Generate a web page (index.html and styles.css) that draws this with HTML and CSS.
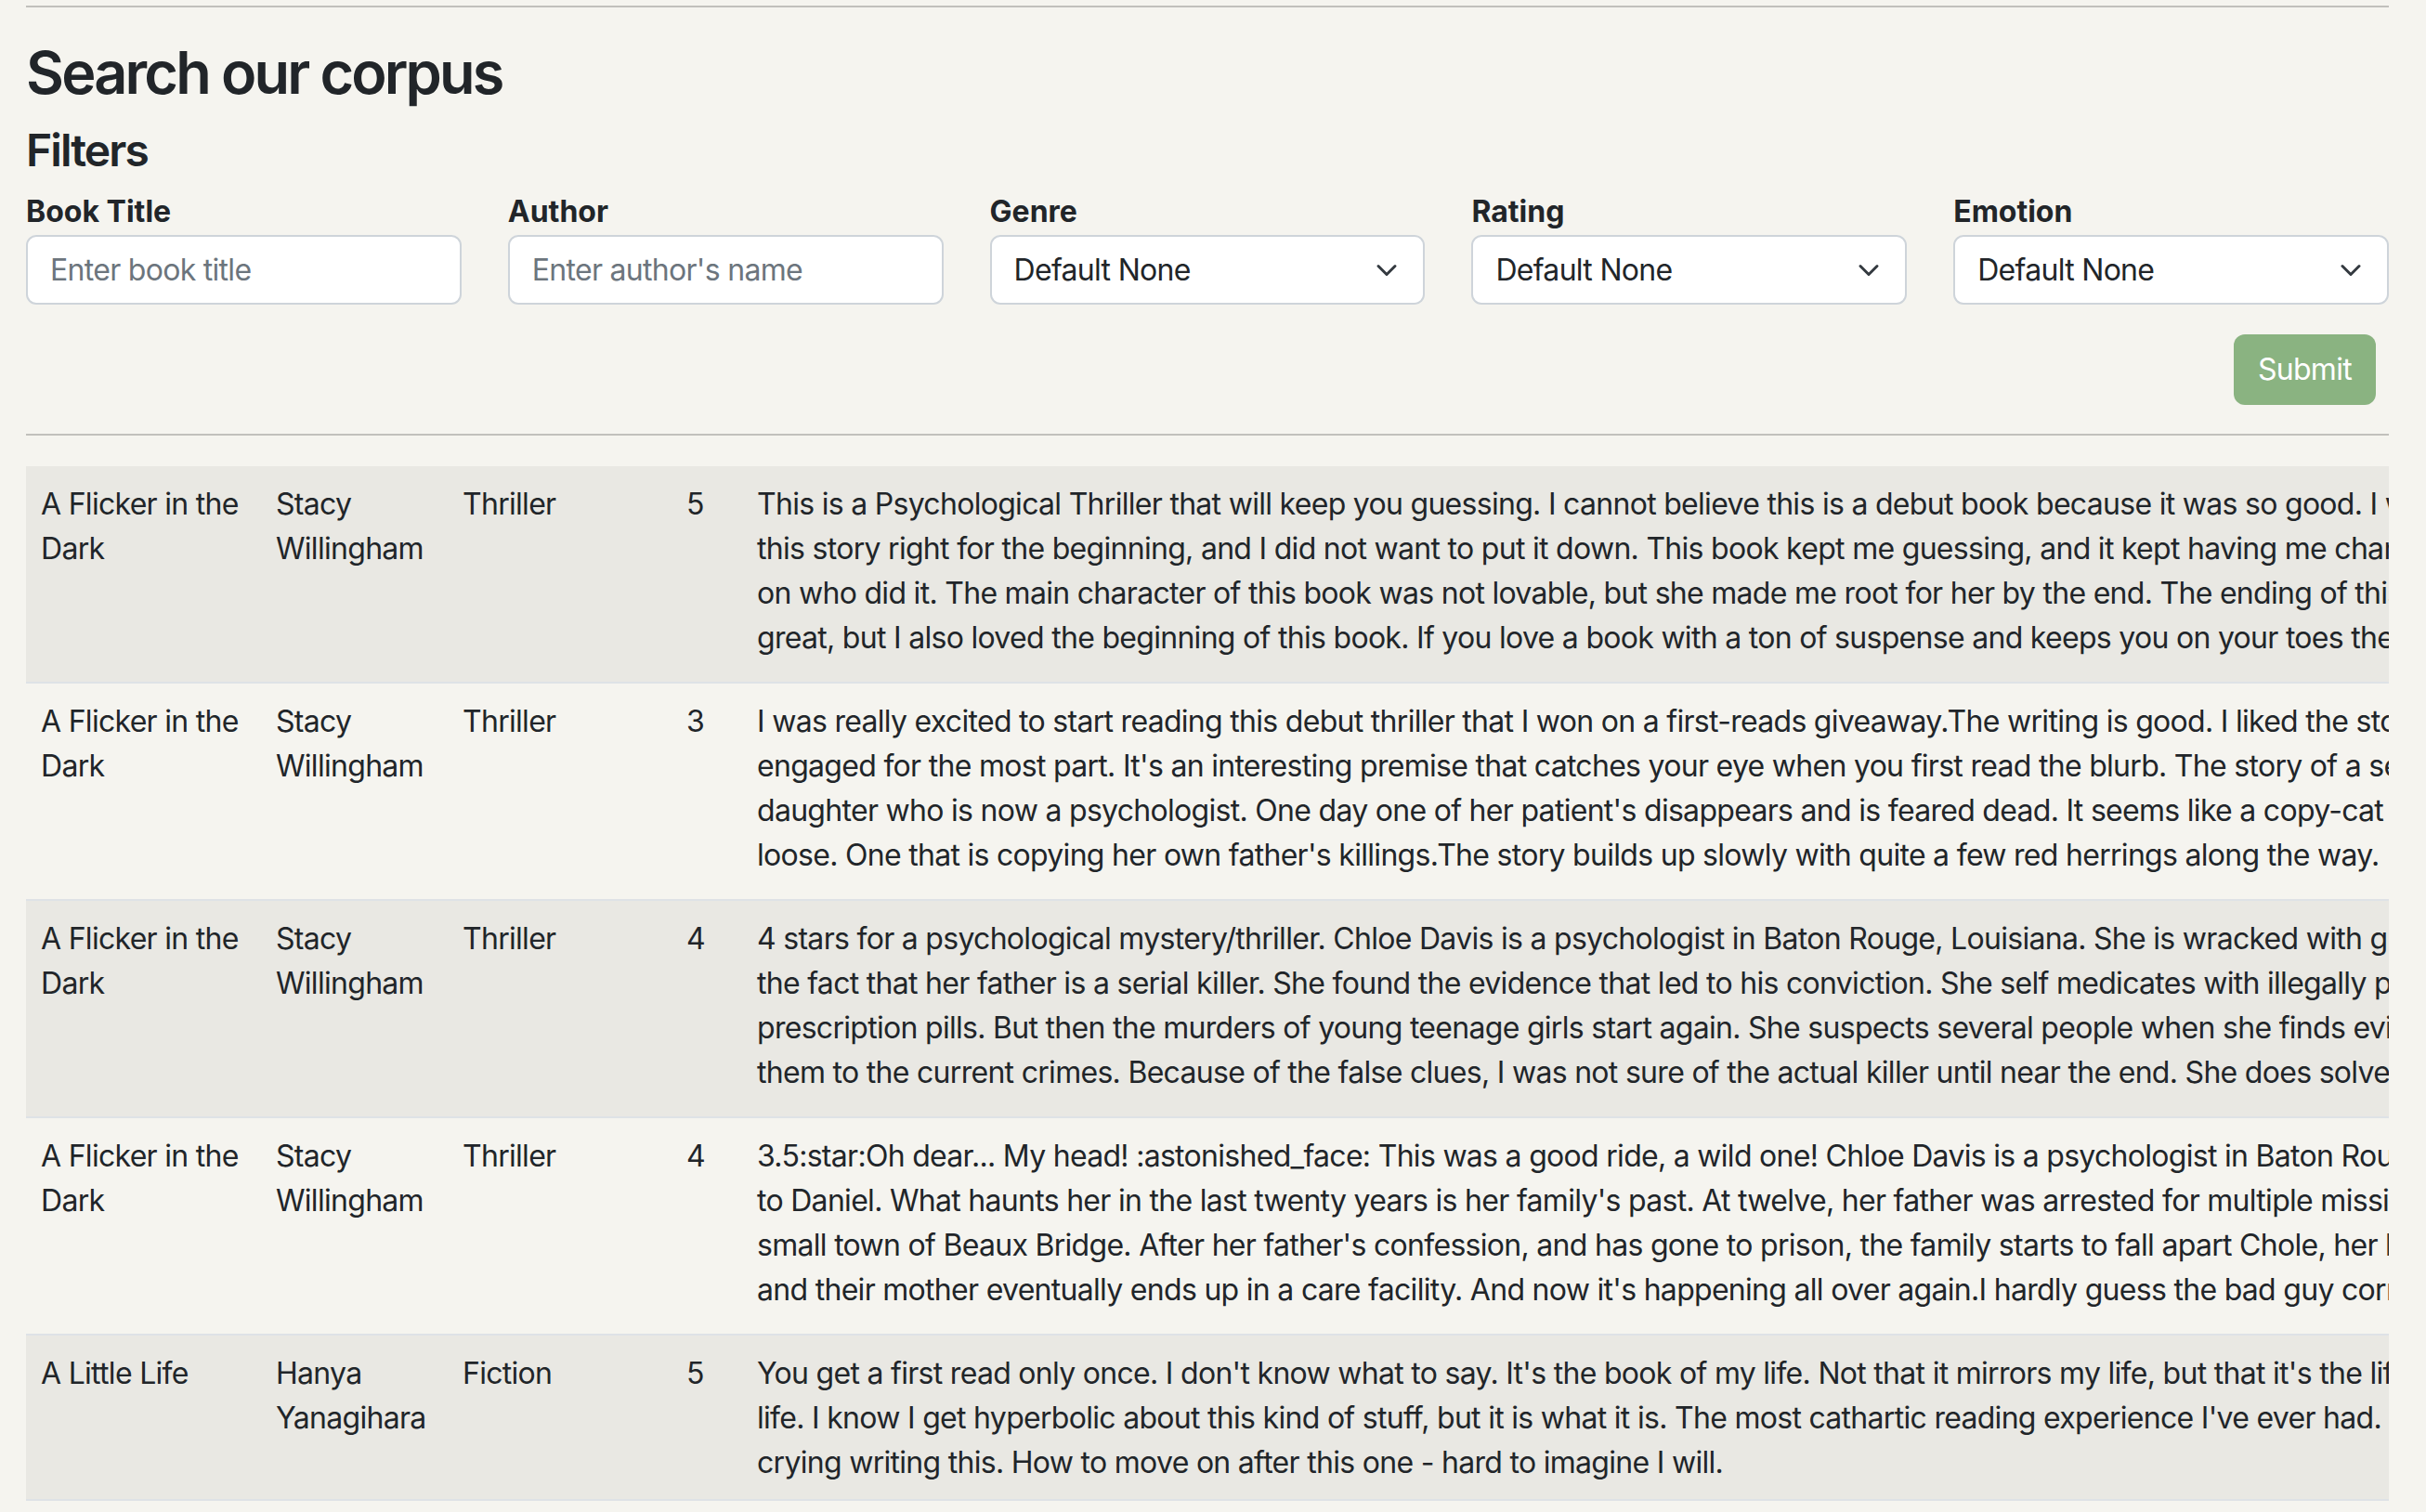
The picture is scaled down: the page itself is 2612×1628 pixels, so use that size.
FILE: index.html
```html
<!DOCTYPE html>
<html lang="en">
<head>
<meta charset="utf-8">
<title>Search our corpus</title>
<link rel="stylesheet" href="styles.css">
</head>
<body>
<div class="page">
  <hr class="rule">
  <h2 class="title">Search our corpus</h2>
  <h4 class="subtitle">Filters</h4>
  <form class="filters">
    <div class="filter-grid">
      <div class="field">
        <label class="field-label" for="book-title">Book Title</label>
        <input class="field-input" id="book-title" type="text" placeholder="Enter book title">
      </div>
      <div class="field">
        <label class="field-label" for="author">Author</label>
        <input class="field-input" id="author" type="text" placeholder="Enter author's name">
      </div>
      <div class="field">
        <div class="field-label">Genre</div>
        <div class="field-select"><span>Default None</span><svg class="chevron" viewBox="0 0 16 16"><path d="m2 5 6 6 6-6" fill="none" stroke="#343a40" stroke-width="2" stroke-linecap="round" stroke-linejoin="round"/></svg></div>
      </div>
      <div class="field">
        <div class="field-label">Rating</div>
        <div class="field-select"><span>Default None</span><svg class="chevron" viewBox="0 0 16 16"><path d="m2 5 6 6 6-6" fill="none" stroke="#343a40" stroke-width="2" stroke-linecap="round" stroke-linejoin="round"/></svg></div>
      </div>
      <div class="field">
        <div class="field-label">Emotion</div>
        <div class="field-select"><span>Default None</span><svg class="chevron" viewBox="0 0 16 16"><path d="m2 5 6 6 6-6" fill="none" stroke="#343a40" stroke-width="2" stroke-linecap="round" stroke-linejoin="round"/></svg></div>
      </div>
    </div>
    <div class="actions">
      <button class="btn-submit" type="button">Submit</button>
    </div>
  </form>
  <hr class="rule rule-bottom">
  <div class="results">
    <table class="results-table">
      <colgroup>
        <col class="col-title">
        <col class="col-author">
        <col class="col-genre">
        <col class="col-rating">
        <col class="col-review">
      </colgroup>
      <tbody>
        <tr class="row-striped row-tall">
          <td>A Flicker in the<br>Dark</td>
          <td>Stacy<br>Willingham</td>
          <td>Thriller</td>
          <td>5</td>
          <td>This is a Psychological Thriller that will keep you guessing. I cannot believe this is a debut book because it was so good. I was hooked on<br>this story right for the beginning, and I did not want to put it down. This book kept me guessing, and it kept having me change my mind<br>on who did it. The main character of this book was not lovable, but she made me root for her by the end. The ending of this book was<br>great, but I also loved the beginning of this book. If you love a book with a ton of suspense and keeps you on your toes then this is the book for you.</td>
        </tr>
        <tr class="row-tall">
          <td>A Flicker in the<br>Dark</td>
          <td>Stacy<br>Willingham</td>
          <td>Thriller</td>
          <td>3</td>
          <td>I was really excited to start reading this debut thriller that I won on a first-reads giveaway.The writing is good. I liked the story and I stayed<br>engaged for the most part. It's an interesting premise that catches your eye when you first read the blurb. The story of a serial killer's<br>daughter who is now a psychologist. One day one of her patient's disappears and is feared dead. It seems like a copy-cat killer is on the<br>loose. One that is copying her own father's killings.The story builds up slowly with quite a few red herrings along the way. I guessed</td>
        </tr>
        <tr class="row-striped row-tall">
          <td>A Flicker in the<br>Dark</td>
          <td>Stacy<br>Willingham</td>
          <td>Thriller</td>
          <td>4</td>
          <td>4 stars for a psychological mystery/thriller. Chloe Davis is a psychologist in Baton Rouge, Louisiana. She is wracked with guilt over<br>the fact that her father is a serial killer. She found the evidence that led to his conviction. She self medicates with illegally prescribed<br>prescription pills. But then the murders of young teenage girls start again. She suspects several people when she finds evidence linking<br>them to the current crimes. Because of the false clues, I was not sure of the actual killer until near the end. She does solve the crime.</td>
        </tr>
        <tr class="row-tall">
          <td>A Flicker in the<br>Dark</td>
          <td>Stacy<br>Willingham</td>
          <td>Thriller</td>
          <td>4</td>
          <td>3.5:star:Oh dear... My head! :astonished_face: This was a good ride, a wild one! Chloe Davis is a psychologist in Baton Rouge, engaged<br>to Daniel. What haunts her in the last twenty years is her family's past. At twelve, her father was arrested for multiple missing girls<br>small town of Beaux Bridge. After her father's confession, and has gone to prison, the family starts to fall apart Chole, her brother<br>and their mother eventually ends up in a care facility. And now it's happening all over again.I hardly guess the bad guy correctly.</td>
        </tr>
        <tr class="row-striped">
          <td>A Little Life</td>
          <td>Hanya<br>Yanagihara</td>
          <td>Fiction</td>
          <td>5</td>
          <td>You get a first read only once. I don't know what to say. It's the book of my life. Not that it mirrors my life, but that it's the life<br>life. I know I get hyperbolic about this kind of stuff, but it is what it is. The most cathartic reading experience I've ever had. I'm<br>crying writing this. How to move on after this one - hard to imagine I will.</td>
        </tr>
      </tbody>
    </table>
  </div>
</div>
</body>
</html>
```

FILE: styles.css
```css
* {
  box-sizing: border-box;
}

body {
  margin: 0;
  background: #f5f4ef;
  color: #212529;
  font-family: Inter, "Liberation Sans", sans-serif;
  font-size: 32px;
  line-height: 48px;
  letter-spacing: -0.022em;
}

.page {
  margin-left: 28px;
  width: 2544px;
  padding-top: 6px;
}

.rule {
  margin: 0;
  height: 0;
  border: 0;
  border-top: 2px solid #c1c0bc;
}

.title {
  margin: 32px 0 16px;
  font-size: 63px;
  line-height: 77px;
  font-weight: 600;
  letter-spacing: -0.045em;
}

.subtitle {
  margin: 0 0 15px;
  font-size: 48px;
  line-height: 58px;
  font-weight: 600;
  letter-spacing: -0.04em;
}

.filters {
  margin: 0;
}

.filter-grid {
  display: grid;
  grid-template-columns: repeat(5, 1fr);
  column-gap: 50px;
}

.field-label {
  display: block;
  margin-bottom: 3px;
  font-weight: 700;
  line-height: 44px;
  letter-spacing: 0;
}

.field-input,
.field-select {
  width: 100%;
  height: 75px;
  border: 2px solid #ced4da;
  border-radius: 11px;
  background: #fff;
  color: #212529;
  font: inherit;
  letter-spacing: inherit;
  padding: 0 24px;
}

.field-input::placeholder {
  color: #6c757d;
  opacity: 1;
}

.field-select {
  display: flex;
  align-items: center;
  justify-content: space-between;
  padding: 0 27px 0 24px;
}

.chevron {
  width: 24px;
  height: 24px;
  flex: none;
}

.actions {
  display: flex;
  justify-content: flex-end;
  margin-top: 32px;
  padding-right: 14px;
}

.btn-submit {
  height: 76px;
  padding: 0 26px;
  border: 0;
  border-radius: 12px;
  background: #8ab381;
  color: #fff;
  font: inherit;
  letter-spacing: inherit;
}

.rule-bottom {
  margin-top: 31px;
}

.results {
  margin-top: 33px;
  width: 2544px;
  overflow: hidden;
}

.results-table {
  border-collapse: collapse;
  table-layout: fixed;
  width: 3371px;
}

.col-title { width: 253px; }
.col-author { width: 201px; }
.col-genre { width: 241px; }
.col-rating { width: 76px; }
.col-review { width: 2600px; }

.results-table td {
  padding: 17px 16px 15px;
  vertical-align: top;
  white-space: nowrap;
  border-bottom: 2px solid #dee2e6;
}

.row-tall td {
  padding-bottom: 23px;
}

.row-striped td {
  background: #e9e8e3;
}
```
